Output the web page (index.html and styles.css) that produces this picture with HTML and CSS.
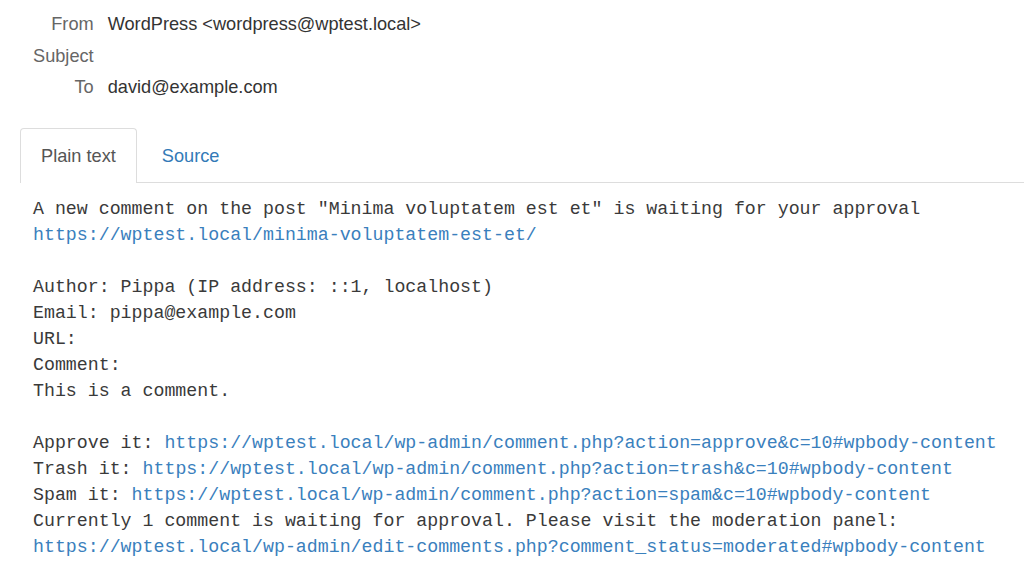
FILE: index.html
```html
<!DOCTYPE html>
<html>
<head>
<meta charset="utf-8">
<link rel="stylesheet" href="styles.css">
</head>
<body>
<div class="headers">
  <div class="label">From</div><div class="value">WordPress &lt;wordpress@wptest.local&gt;</div>
  <div class="label">Subject</div><div class="value"></div>
  <div class="label">To</div><div class="value">david@example.com</div>
</div>
<div class="tabs">
  <div class="tab active">Plain text</div>
  <div class="tab link">Source</div>
</div>
<div class="body">
  <div class="line">A new comment on the post "Minima voluptatem est et" is waiting for your approval</div>
  <div class="line"><a class="url">https://wptest.local/minima-voluptatem-est-et/</a></div>
  <div class="line"> </div>
  <div class="line">Author: Pippa (IP address: ::1, localhost)</div>
  <div class="line">Email: pippa@example.com</div>
  <div class="line">URL:</div>
  <div class="line">Comment:</div>
  <div class="line">This is a comment.</div>
  <div class="line"> </div>
  <div class="line"><span>Approve it: </span><a class="url">https://wptest.local/wp-admin/comment.php?action=approve&amp;c=10#wpbody-content</a></div>
  <div class="line"><span>Trash it: </span><a class="url">https://wptest.local/wp-admin/comment.php?action=trash&amp;c=10#wpbody-content</a></div>
  <div class="line"><span>Spam it: </span><a class="url">https://wptest.local/wp-admin/comment.php?action=spam&amp;c=10#wpbody-content</a></div>
  <div class="line">Currently 1 comment is waiting for approval. Please visit the moderation panel:</div>
  <div class="line"><a class="url">https://wptest.local/wp-admin/edit-comments.php?comment_status=moderated#wpbody-content</a></div>
</div>
</body>
</html>
```
FILE: styles.css
```css
html, body {
  margin: 0;
  padding: 0;
  background: #fff;
}
body {
  font-family: "Liberation Sans", Arial, sans-serif;
  font-size: 18.2px;
  color: #333;
  width: 1024px;
  height: 586px;
  overflow: hidden;
}
.headers {
  display: grid;
  grid-template-columns: auto 1fr;
  column-gap: 14px;
  padding: 9px 0 0 33px;
  grid-auto-rows: 31.5px;
  align-items: center;
}
.label {
  text-align: right;
  color: #666;
}
.value {
  color: #333;
}
.tabs {
  display: flex;
  gap: 4px;
  margin-top: 24px;
  margin-left: 20px;
  border-bottom: 1px solid #ddd;
  align-items: stretch;
}
.tab {
  padding: 0 20px;
  height: 53px;
  line-height: 55px;
  border: 1px solid transparent;
  border-bottom: none;
  border-radius: 4px 4px 0 0;
}
.tab.active {
  border-color: #ddd;
  color: #555;
  background: #fff;
  margin-bottom: -1px;
  height: 54px;
}
.tab.link {
  color: #337ab7;
}
.body {
  margin: 13px 0 0 0;
  padding-left: 33px;
  font-family: "Liberation Mono", "Courier New", monospace;
  font-size: 18.25px;
  line-height: 26px;
  color: #3a3a3a;
}
.line {
  white-space: pre;
  height: 26px;
}
.url {
  color: #3a80bd;
  text-decoration: none;
}
```
